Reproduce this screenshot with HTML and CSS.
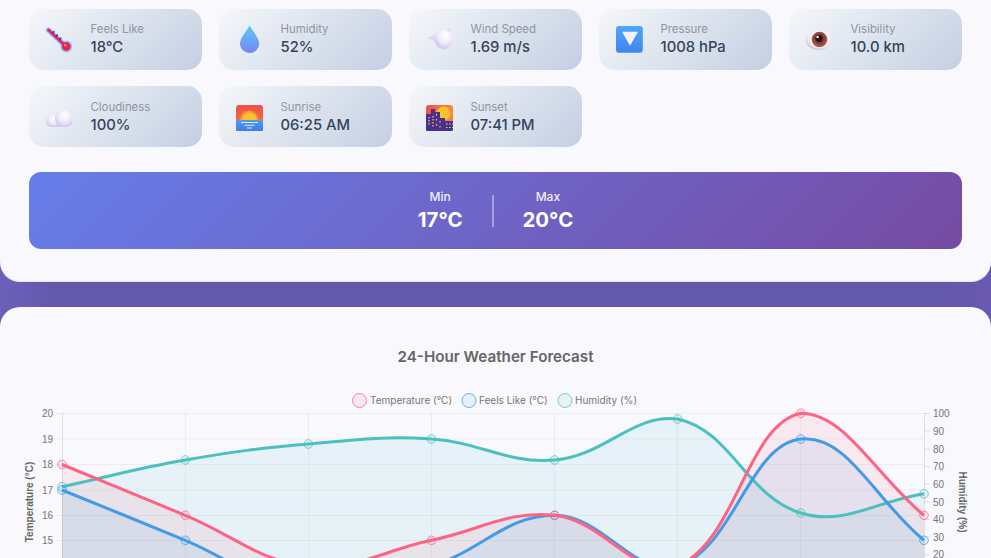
FILE: index.html
```html
<!DOCTYPE html>
<html lang="en">
<head>
<meta charset="utf-8">
<title>Weather</title>
<link rel="stylesheet" href="styles.css">
</head>
<body>
<svg class="defs" width="0" height="0" aria-hidden="true">
  <defs>
    <linearGradient id="dropG" x1="0" y1="0" x2="0" y2="1"><stop offset="0" stop-color="#5fc6fb"/><stop offset="1" stop-color="#7487f2"/></linearGradient>
    <linearGradient id="btnG" x1="0" y1="0" x2="0" y2="1"><stop offset="0" stop-color="#4fa5f8"/><stop offset="1" stop-color="#3f86ee"/></linearGradient>
    <radialGradient id="puffG" cx=".6" cy=".3" r=".8"><stop offset="0" stop-color="#ffffff"/><stop offset=".55" stop-color="#ece6f6"/><stop offset="1" stop-color="#c9b9ec"/></radialGradient>
    <radialGradient id="windG" cx=".6" cy=".3" r=".85"><stop offset="0" stop-color="#ffffff"/><stop offset=".5" stop-color="#efe9f8"/><stop offset="1" stop-color="#bfaaf0"/></radialGradient>
    <linearGradient id="skyG" x1="0" y1="0" x2="0" y2="1"><stop offset="0" stop-color="#ee4f4a"/><stop offset="1" stop-color="#fb7d3a"/></linearGradient>
    <linearGradient id="seaG" x1="0" y1="0" x2="0" y2="1"><stop offset="0" stop-color="#4a9cf4"/><stop offset="1" stop-color="#4278e4"/></linearGradient>
    <linearGradient id="duskG" x1="0" y1="0" x2="1" y2="0"><stop offset="0" stop-color="#e9524f"/><stop offset="1" stop-color="#f98a3a"/></linearGradient>
    <radialGradient id="irisG" cx=".5" cy=".45" r=".55"><stop offset="0" stop-color="#5a1c22"/><stop offset=".6" stop-color="#8a4238"/><stop offset="1" stop-color="#a86a58"/></radialGradient>
    <radialGradient id="eyeG" cx=".55" cy=".4" r=".65"><stop offset="0" stop-color="#ffffff"/><stop offset=".75" stop-color="#efe8ee"/><stop offset="1" stop-color="#b9a6b4"/></radialGradient>
  </defs>
</svg>

<section class="panel panel-current">
  <div class="stat-grid">
    <div class="stat">
      <svg class="stat-icon" viewBox="0 0 28 28">
        <path class="thermo-halo" d="M3.500 5L21 21.500"/>
        <circle cx="21.300" cy="21.500" r="6" fill="#8ecbf6"/>
        <path class="thermo-stem" d="M3.500 5L21 21.500"/>
        <path class="thermo-tick" d="M7.500 8.200l1.800-2M11 11.500l1.800-2M14.500 14.800l1.800-2"/>
        <circle cx="21.300" cy="21.500" r="4.400" fill="#ee1f4f"/>
        <circle cx="20.200" cy="20.200" r="1.200" fill="#ff8da0"/>
      </svg>
      <div class="stat-text"><span class="stat-label">Feels Like</span><span class="stat-value">18°C</span></div>
    </div>
    <div class="stat">
      <svg class="stat-icon" viewBox="0 0 28 28">
        <path d="M14.600 .6C11.800 6 5 12.800 5 19a9.600 8.900 0 0 0 19.200 0C24.200 12.800 17.400 6 14.600 .6z" fill="url(#dropG)"/>
      </svg>
      <div class="stat-text"><span class="stat-label">Humidity</span><span class="stat-value">52%</span></div>
    </div>
    <div class="stat">
      <svg class="stat-icon" viewBox="0 0 28 28">
        <path d="M2 13l9.500-3.500v7zM25 3l-1.500 7-5-4zM20.500 25.500l-4-5 6-1z" fill="#dfd5f4"/>
        <ellipse cx="18.500" cy="14" rx="9" ry="10" fill="url(#windG)"/>
      </svg>
      <div class="stat-text"><span class="stat-label">Wind Speed</span><span class="stat-value">1.69 m/s</span></div>
    </div>
    <div class="stat">
      <svg class="stat-icon" viewBox="0 0 28 28">
        <rect x="1" y="1" width="26.800" height="26.800" rx="3" fill="url(#btnG)"/>
        <path d="M7 6.800h16l-8 14z" fill="#f6f1ff"/>
      </svg>
      <div class="stat-text"><span class="stat-label">Pressure</span><span class="stat-value">1008 hPa</span></div>
    </div>
    <div class="stat">
      <svg class="stat-icon" viewBox="0 0 28 28">
        <ellipse cx="14" cy="15" rx="13" ry="10" fill="url(#eyeG)"/>
        <circle cx="14.500" cy="14.500" r="7.800" fill="url(#irisG)"/>
        <circle cx="14" cy="13.500" r="3.400" fill="#2e0e1a"/>
        <circle cx="12.600" cy="12" r="1.300" fill="#f5eef0"/>
      </svg>
      <div class="stat-text"><span class="stat-label">Visibility</span><span class="stat-value">10.0 km</span></div>
    </div>
    <div class="stat">
      <svg class="stat-icon" viewBox="0 0 28 28">
        <path d="M7 24h15a7 7 0 0 0 5-3V14H4l-3 5.500A5.500 5.500 0 0 0 7 24z" fill="#d8ccf0"/>
        <circle cx="7.500" cy="18" r="6" fill="url(#puffG)"/>
        <circle cx="18.500" cy="15.500" r="8.500" fill="url(#puffG)"/>
      </svg>
      <div class="stat-text"><span class="stat-label">Cloudiness</span><span class="stat-value">100%</span></div>
    </div>
    <div class="stat">
      <svg class="stat-icon" viewBox="0 0 28 28">
        <rect x="1" y="2" width="27" height="26.800" rx="3" fill="url(#skyG)"/>
        <path d="M1 17h27v8.800a3 3 0 0 1-3 3H4a3 3 0 0 1-3-3z" fill="url(#seaG)"/>
        <path d="M14.500 7l1.600 1.400 2-.6.9 1.900 2.100.2.100 2.100 1.900.9-.6 2L24 17H5l1-2.100-.6-2 1.900-.9.100-2.100 2.100-.2.900-1.900 2 .6z" fill="#f5a02a"/>
        <path d="M7.500 17a7 7 0 0 1 14 0z" fill="#fdc02f"/>
        <path class="sun-line" d="M6 19.500h17M9.500 22.300h10M12 25h5"/>
      </svg>
      <div class="stat-text"><span class="stat-label">Sunrise</span><span class="stat-value">06:25 AM</span></div>
    </div>
    <div class="stat">
      <svg class="stat-icon" viewBox="0 0 28 28">
        <rect x="1" y="2" width="27" height="26.800" rx="3" fill="url(#duskG)"/>
        <circle cx="18.500" cy="10.500" r="7" fill="#fdc02f"/>
        <path d="M1 11h5V6h4v3h5v6h5v3h8v7.800a3 3 0 0 1-3 3H4a3 3 0 0 1-3-3z" fill="#49308f"/>
        <path class="win" d="M4 14v9M8 13v12M11.500 11v3M11.500 16v3M11.500 21v3M15 18v2M15 23v2M21 21h7M21 24.500h7"/>
      </svg>
      <div class="stat-text"><span class="stat-label">Sunset</span><span class="stat-value">07:41 PM</span></div>
    </div>
  </div>

  <div class="range">
    <div class="range-item"><span class="range-label">Min</span><span class="range-value">17°C</span></div>
    <div class="range-divider"></div>
    <div class="range-item"><span class="range-label">Max</span><span class="range-value">20°C</span></div>
  </div>
</section>

<section class="panel panel-chart">
  <h2 class="chart-title">24-Hour Weather Forecast</h2>
  <svg class="chart" viewBox="0 385 991 173" width="991" height="173">
    <g class="legend">
      <circle class="pt-temp" cx="359.500" cy="400.500" r="7"/>
      <text x="370" y="404">Temperature (°C)</text>
      <circle class="pt-feels" cx="469" cy="400.500" r="7"/>
      <text x="479" y="404">Feels Like (°C)</text>
      <circle class="pt-hum" cx="565" cy="400.500" r="7"/>
      <text x="575" y="404">Humidity (%)</text>
    </g>

    <path class="grid" d="M56 413.500H924M56 439H924M56 464.500H924M56 490H924M56 515.500H924M56 540.500H924"/>
    <path class="grid" d="M185.500 413V560M308.500 413V560M431.500 413V560M554.500 413V560M677.500 413V560M800.500 413V560"/>
    <path class="axis" d="M62.500 413V560M924.500 413V560"/>
    <path class="axis" d="M924 413.500h6M924 431h6M924 449h6M924 466.500h6M924 484h6M924 502h6M924 519.500h6M924 537h6M924 555h6"/>

    <g class="ticks-left">
      <text x="53" y="417">20</text><text x="53" y="442.500">19</text><text x="53" y="468">18</text><text x="53" y="493.500">17</text><text x="53" y="519">16</text><text x="53" y="544">15</text>
    </g>
    <g class="ticks-right">
      <text x="933" y="417">100</text><text x="933" y="434.500">90</text><text x="933" y="452.500">80</text><text x="933" y="470">70</text><text x="933" y="488">60</text><text x="933" y="505.500">50</text><text x="933" y="523">40</text><text x="933" y="541">30</text><text x="933" y="557.500">20</text>
    </g>
    <text class="axis-title" transform="translate(33 502) rotate(-90)">Temperature (°C)</text>
    <text class="axis-title" transform="translate(959 502) rotate(90)">Humidity (%)</text>

    <path class="fill-hum" d="M62 486.700C111.300 476 136 468.500 185.300 460C234.600 451.500 259.200 448.200 308.400 444C357.600 439.800 382.700 435.800 431.500 439C481.100 442.200 506.200 463.900 554.600 460C604.800 455.900 632.800 413.300 677.700 419C731.300 430.500 746.200 496.400 800.800 513C844.700 526.300 874.700 501.400 924 493.700V592H62Z"/>
    <path class="fill-feels" d="M62 490C111.300 510.100 136 519.900 185.300 540.300C234.600 560.700 257.700 586.500 308.400 591.800C356.200 596.800 383.600 580.900 431.500 566C482.100 550.300 505.400 515.300 554.600 515.300C603.800 515.300 635.500 579.100 677.700 566C733.900 548.600 748.900 444.400 800.800 439C847.400 434.100 874.700 499.800 924 540.300V592H62Z"/>
    <path class="fill-temp" d="M62 464.500C111.300 484.800 136 495 185.300 515.300C234.600 535.600 257.800 560.900 308.400 566C356.300 570.900 382.300 550.400 431.500 540.300C480.700 530.200 506.800 510.300 554.600 515.300C605.200 520.600 637.900 582.500 677.700 566C736.300 541.700 746.600 424.500 800.800 413.300C845.100 413.300 874.700 474.500 924 515.300V592H62Z"/>

    <path class="line-hum" d="M62 486.700C111.300 476 136 468.500 185.300 460C234.600 451.500 259.200 448.200 308.400 444C357.600 439.800 382.700 435.800 431.500 439C481.100 442.200 506.200 463.900 554.600 460C604.800 455.900 632.800 413.300 677.700 419C731.300 430.500 746.200 496.400 800.800 513C844.700 526.300 874.700 501.400 924 493.700"/>
    <g class="pt-hum">
      <circle cx="62" cy="486.700" r="4.300"/><circle cx="185.300" cy="460" r="4.300"/><circle cx="308.400" cy="444" r="4.300"/><circle cx="431.500" cy="439" r="4.300"/><circle cx="554.600" cy="460" r="4.300"/><circle cx="677.700" cy="419" r="4.300"/><circle cx="800.800" cy="513" r="4.300"/><circle cx="924" cy="493.700" r="4.300"/>
    </g>
    <path class="line-feels" d="M62 490C111.300 510.100 136 519.900 185.300 540.300C234.600 560.700 257.700 586.500 308.400 591.800C356.200 596.800 383.600 580.900 431.500 566C482.100 550.300 505.400 515.300 554.600 515.300C603.800 515.300 635.500 579.100 677.700 566C733.900 548.600 748.900 444.400 800.800 439C847.400 434.100 874.700 499.800 924 540.300"/>
    <g class="pt-feels">
      <circle cx="62" cy="490" r="4.300"/><circle cx="185.300" cy="540.300" r="4.300"/><circle cx="554.600" cy="515.300" r="4.300"/><circle cx="800.800" cy="439" r="4.300"/><circle cx="924" cy="540.300" r="4.300"/>
    </g>
    <path class="line-temp" d="M62 464.500C111.300 484.800 136 495 185.300 515.300C234.600 535.600 257.800 560.900 308.400 566C356.300 570.900 382.300 550.400 431.500 540.300C480.700 530.200 506.800 510.300 554.600 515.300C605.200 520.600 637.900 582.500 677.700 566C736.300 541.700 746.600 424.500 800.800 413.300C845.100 413.300 874.700 474.500 924 515.300"/>
    <g class="pt-temp">
      <circle cx="62" cy="464.500" r="4.300"/><circle cx="185.300" cy="515.300" r="4.300"/><circle cx="431.500" cy="540.300" r="4.300"/><circle cx="554.600" cy="515.300" r="4.300"/><circle cx="800.800" cy="413.300" r="4.300"/><circle cx="924" cy="515.300" r="4.300"/>
    </g>
  </svg>
</section>
</body>
</html>
```
FILE: styles.css
```css
* { box-sizing: border-box; }
html, body { margin: 0; height: 558px; overflow: hidden; }
body {
  background: linear-gradient(90deg, #6a60ba 0, #6259ab 6%, #6259ab 94%, #6a58b0 100%);
  font-family: Inter, "Liberation Sans", sans-serif;
}
.defs { position: absolute; }
.panel { background: #f8f8fd; }
.panel-current {
  border-radius: 0 0 20px 20px;
  padding: 9px 29px 32px;
  margin-bottom: 25px;
  border-bottom: 1px solid #e6e6ee;
}
.panel-chart { border-radius: 20px 20px 0 0; height: 251px; overflow: hidden; }

.stat-grid { display: grid; grid-template-columns: repeat(5, 173px); gap: 16.4px 17px; margin-bottom: 25px; }
.stat {
  height: 60.8px;
  display: flex;
  align-items: center;
  gap: 17.5px;
  padding-left: 16px;
  border-radius: 15px;
  background: linear-gradient(135deg, #f5f7fa 0%, #c3cfe2 100%);
}
.stat-icon { width: 28px; height: 28px; flex: none; }
.stat-text { display: flex; flex-direction: column; gap: 2px; }
.stat-label { font-size: 11.4px; line-height: 14px; color: #8b95a1; }
.stat-value { font-size: 14.8px; line-height: 18px; font-weight: 500; color: #34435a; }

.thermo-halo { stroke: #8ecbf6; stroke-width: 5.4; stroke-linecap: round; fill: none; }
.thermo-stem { stroke: #e2266f; stroke-width: 3; stroke-linecap: round; fill: none; }
.thermo-tick { stroke: #4a2a6c; stroke-width: 1.4; fill: none; }
.sun-line { stroke: #f2f6ff; stroke-width: .9; fill: none; }
.win { stroke: #f5c84a; stroke-width: 1.2; stroke-dasharray: 1.6 1.4; fill: none; }

.range {
  height: 77px;
  display: flex;
  justify-content: center;
  align-items: center;
  gap: 29px;
  padding-top: 2px;
  border-radius: 12px;
  background: linear-gradient(135deg, #667eea 0%, #764ba2 100%);
  color: #fff;
}
.range-item { display: flex; flex-direction: column; align-items: center; gap: 3px; }
.range-label { font-size: 12px; line-height: 15px; font-weight: 500; opacity: .9; }
.range-value { font-size: 20.4px; line-height: 26px; font-weight: 700; }
.range-divider { width: 2px; height: 32px; background: rgba(255, 255, 255, .4); }

.chart-title {
  margin: 0;
  padding-top: 40px;
  height: 78px;
  text-align: center;
  font-size: 15.2px;
  line-height: 20px;
  font-weight: 600;
  color: #666;
}
.chart { display: block; }
.legend text { font: 10px Inter, sans-serif; fill: #777; }
.ticks-left text, .ticks-right text { font: 10px "Liberation Sans", sans-serif; fill: #777; }
.ticks-left text { text-anchor: end; }
.axis-title { font: bold 10px "Liberation Sans", sans-serif; fill: #666; text-anchor: middle; }
.grid { stroke: rgba(0, 0, 0, .05); stroke-width: 1; fill: none; }
.axis { stroke: rgba(0, 0, 0, .1); stroke-width: 1; fill: none; }
.fill-temp { fill: rgba(255, 99, 132, .1); }
.fill-feels { fill: rgba(54, 162, 235, .1); }
.fill-hum { fill: rgba(75, 192, 192, .1); }
.line-temp, .line-feels, .line-hum { fill: none; stroke-width: 3; }
.line-temp { stroke: #ff6384; }
.line-feels { stroke: #439ae6; }
.line-hum { stroke: #4bc0c0; }
.pt-temp { fill: rgba(255, 99, 132, .1); stroke: rgba(255, 99, 132, .75); stroke-width: 1; }
.pt-feels { fill: rgba(54, 162, 235, .1); stroke: rgba(54, 162, 235, .75); stroke-width: 1; }
.pt-hum { fill: rgba(75, 192, 192, .1); stroke: rgba(75, 192, 192, .75); stroke-width: 1; }
```
